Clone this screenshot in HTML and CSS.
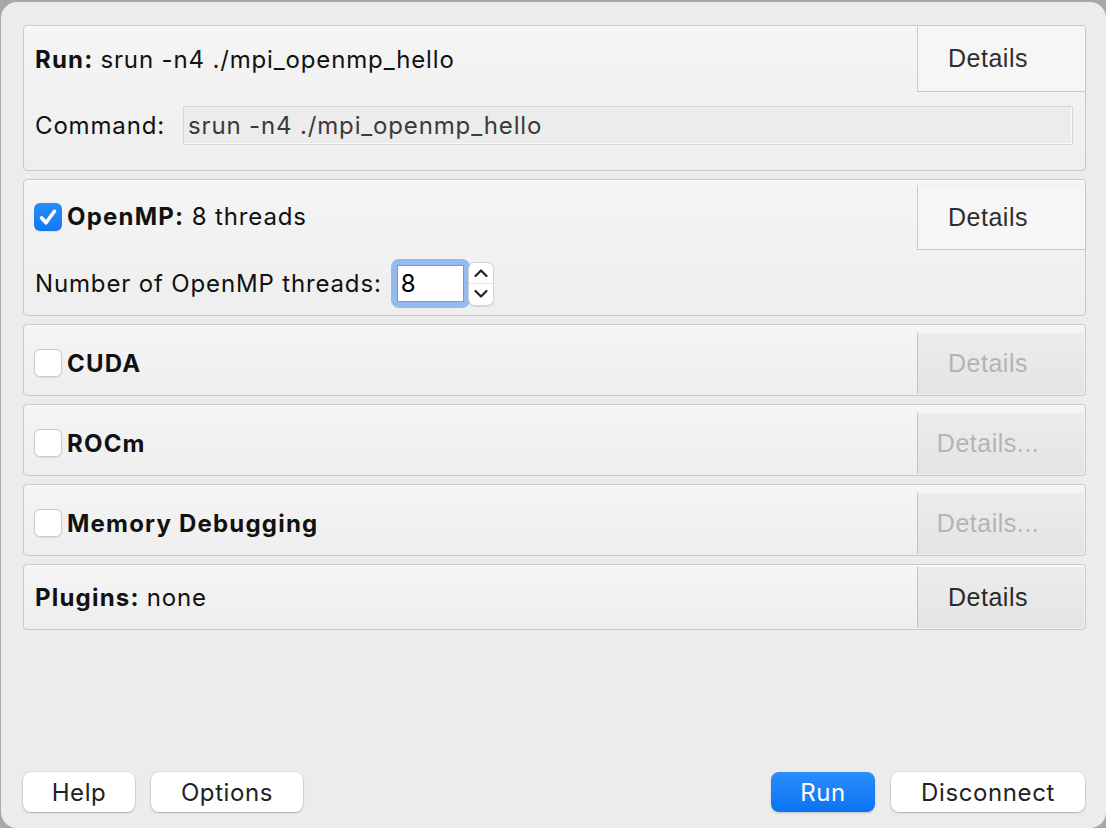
FILE: index.html
```html
<!DOCTYPE html>
<html>
<head>
<meta charset="utf-8">
<link rel="stylesheet" href="styles.css">
</head>
<body>
<div class="window">
  <div class="groups">
    <section class="group g-run">
      <div class="title"><b>Run:</b> srun -n4 ./mpi_openmp_hello</div>
      <button class="details flush">Details</button>
      <div class="body cmd-row">
        <span class="cmd-label">Command:</span>
        <div class="cmd-field">srun -n4 ./mpi_openmp_hello</div>
      </div>
    </section>

    <section class="group g-omp">
      <div class="title"><span class="cb checked"><svg viewBox="0 0 28 28" width="28" height="28"><path d="M7.5 14.8 L12 19.8 L20.5 8.3" fill="none" stroke="#fff" stroke-width="3.6" stroke-linecap="round" stroke-linejoin="round"/></svg></span><b>OpenMP:</b>&nbsp;8 threads</div>
      <button class="details flush omp">Details</button>
      <div class="body num-row">
        <span class="num-label">Number of OpenMP threads:</span>
        <span class="ring"><span class="num-input">8</span></span>
        <span class="stepper">
          <span class="step up"><svg viewBox="0 0 24 20" width="24" height="20"><path d="M6.5 13 L12 7.5 L17.5 13" fill="none" stroke="#222" stroke-width="2.2" stroke-linecap="round" stroke-linejoin="round"/></svg></span>
          <span class="step down"><svg viewBox="0 0 24 20" width="24" height="20"><path d="M6.5 7 L12 12.5 L17.5 7" fill="none" stroke="#222" stroke-width="2.2" stroke-linecap="round" stroke-linejoin="round"/></svg></span>
        </span>
      </div>
    </section>

    <section class="group g-small">
      <div class="title"><span class="cb"></span><b>CUDA</b></div>
      <button class="details inset disabled">Details</button>
    </section>

    <section class="group g-small">
      <div class="title"><span class="cb"></span><b>ROCm</b></div>
      <button class="details inset disabled">Details...</button>
    </section>

    <section class="group g-small">
      <div class="title"><span class="cb"></span><b>Memory Debugging</b></div>
      <button class="details inset disabled">Details...</button>
    </section>

    <section class="group g-plugins">
      <div class="title"><b>Plugins:</b> none</div>
      <button class="details inset plug">Details</button>
    </section>
  </div>

  <div class="footer">
    <div class="left">
      <button class="pbtn help">Help</button>
      <button class="pbtn options">Options</button>
    </div>
    <div class="right">
      <button class="pbtn primary run">Run</button>
      <button class="pbtn disconnect">Disconnect</button>
    </div>
  </div>
</div>
</body>
</html>
```

FILE: styles.css
```css
html, body {
  margin: 0;
  padding: 0;
  background: #a8a8a8;
}
body {
  width: 1106px;
  height: 828px;
  overflow: hidden;
  font-family: "Inter", "Liberation Sans", sans-serif;
  color: #111;
}
.window {
  box-sizing: border-box;
  width: 1105px;
  height: 826px;
  margin: 2px 0 0 1px;
  background: #ececec;
  border-radius: 16px;
  display: flex;
  flex-direction: column;
  padding: 23px 20px 0 22px;
}
.groups {
  display: flex;
  flex-direction: column;
  gap: 8px;
}
.group {
  display: grid;
  grid-template-columns: 1fr 168px;
  border: 1px solid #c9c9c9;
  border-radius: 4px;
  background: linear-gradient(#f5f5f5, #eeeeee);
  box-shadow: inset 0 1px 0 #fbfbfb;
}
.title {
  display: flex;
  align-items: center;
  padding-left: 11px;
  font-size: 24px;
  letter-spacing: 0.85px;
  white-space: nowrap;
}
.title b { font-weight: 700; margin-right: 7px; letter-spacing: 1.2px; }
.g-small .title b, .g-omp .title b { margin-right: 0; }
.g-omp .title { padding-left: 10px; padding-top: 3px; }
.g-small .title { padding-left: 10px; padding-top: 6px; }

.details {
  box-sizing: border-box;
  font-family: "Liberation Sans", Arial, sans-serif;
  font-size: 25px;
  letter-spacing: 0.5px;
  color: #2e2e2e;
  background: #f6f6f6;
  border: 0;
  border-left: 1px solid #c9c9c9;
  padding: 0 27px 0 0;
  margin: 0;
  cursor: default;
}
.details.flush {
  height: 66px;
  border-bottom: 1px solid #c9c9c9;
  border-radius: 0 4px 0 0;
}
.details.omp {
  margin-top: 5px;
  height: 65px;
  border-top: 1px solid #f0f0f0;
  border-radius: 0;
}
.details.inset {
  height: 62px;
  margin: 7px 1px 1px 0;
  padding-right: 26px;
  background: linear-gradient(#ececec, #e4e4e4);
  border-top: 1px solid #f7f7f7;
  border-left: 1px solid #c4c4c4;
  border-radius: 0 2px 2px 0;
}
.details.disabled { color: #b4b4b4; }
.details.plug { margin: 1px 1px 1px 0; color: #2a2a2a; }

.body {
  grid-column: 1 / 3;
  display: flex;
  align-items: center;
  font-size: 24px;
  letter-spacing: 0.85px;
  padding-left: 11px;
}
.cmd-row {
  padding-top: 14px;
  padding-bottom: 25px;
  padding-right: 12px;
}
.cmd-label {
  width: 148px;
  flex: none;
}
.cmd-field {
  flex: 1;
  box-sizing: border-box;
  height: 39px;
  display: flex;
  align-items: center;
  padding-left: 4px;
  background: #ececec;
  border: 1px solid #d6d6d6;
  box-shadow: inset -1px -1px 0 #fafafa;
  color: #3a3a3a;
  font-size: 24px;
}

.cb {
  box-sizing: border-box;
  width: 28px;
  height: 28px;
  border-radius: 6px;
  margin-right: 5px;
  flex: none;
  background: #fff;
  border: 1px solid #cdcdcd;
  box-shadow: 0 0.5px 1px rgba(0,0,0,0.08);
}
.cb.checked {
  border: 0;
  background: linear-gradient(#2a8cfb, #1278f5);
  display: flex;
}

.num-row {
  padding-top: 9px;
  padding-bottom: 7px;
}
.num-label { margin-right: 9px; }
.ring {
  display: inline-flex;
  padding: 6px;
  border-radius: 8px;
  background: #94bbf0;
}
.num-input {
  box-sizing: border-box;
  width: 67px;
  height: 37px;
  background: #fff;
  border: 1px solid #7e98c0;
  display: flex;
  align-items: center;
  padding-left: 3px;
  font-size: 24px;
  color: #000;
}
.stepper {
  margin-left: -2px;
  box-sizing: border-box;
  width: 26px;
  height: 44px;
  background: #fff;
  border: 1px solid #d4d4d4;
  border-radius: 7px;
  display: flex;
  flex-direction: column;
  box-shadow: 0 0.5px 1px rgba(0,0,0,0.1);
}
.step {
  flex: 1;
  display: flex;
  align-items: center;
  justify-content: center;
}
.step.up { border-bottom: 1px solid #e2e2e2; }

.footer {
  margin-top: auto;
  margin-bottom: 16px;
  display: flex;
  justify-content: space-between;
}
.left, .right {
  display: flex;
  gap: 16px;
}
.pbtn {
  box-sizing: border-box;
  height: 40px;
  border-radius: 8px;
  background: #fff;
  border: 0;
  box-shadow: 0 0 0 0.5px rgba(0,0,0,0.12), 0 1px 2px rgba(0,0,0,0.22);
  font-family: "Inter", "Liberation Sans", sans-serif;
  font-size: 24px;
  letter-spacing: 0.6px;
  color: #222;
  padding: 0;
}
.help { width: 112px; }
.options { width: 152px; }
.run { width: 104px; }
.disconnect { width: 194px; margin-right: 1px; }
.primary {
  background: linear-gradient(#2b8dfb, #0a73f5);
  color: #fff;
  box-shadow: 0 1px 2px rgba(0,0,0,0.2);
}
```
